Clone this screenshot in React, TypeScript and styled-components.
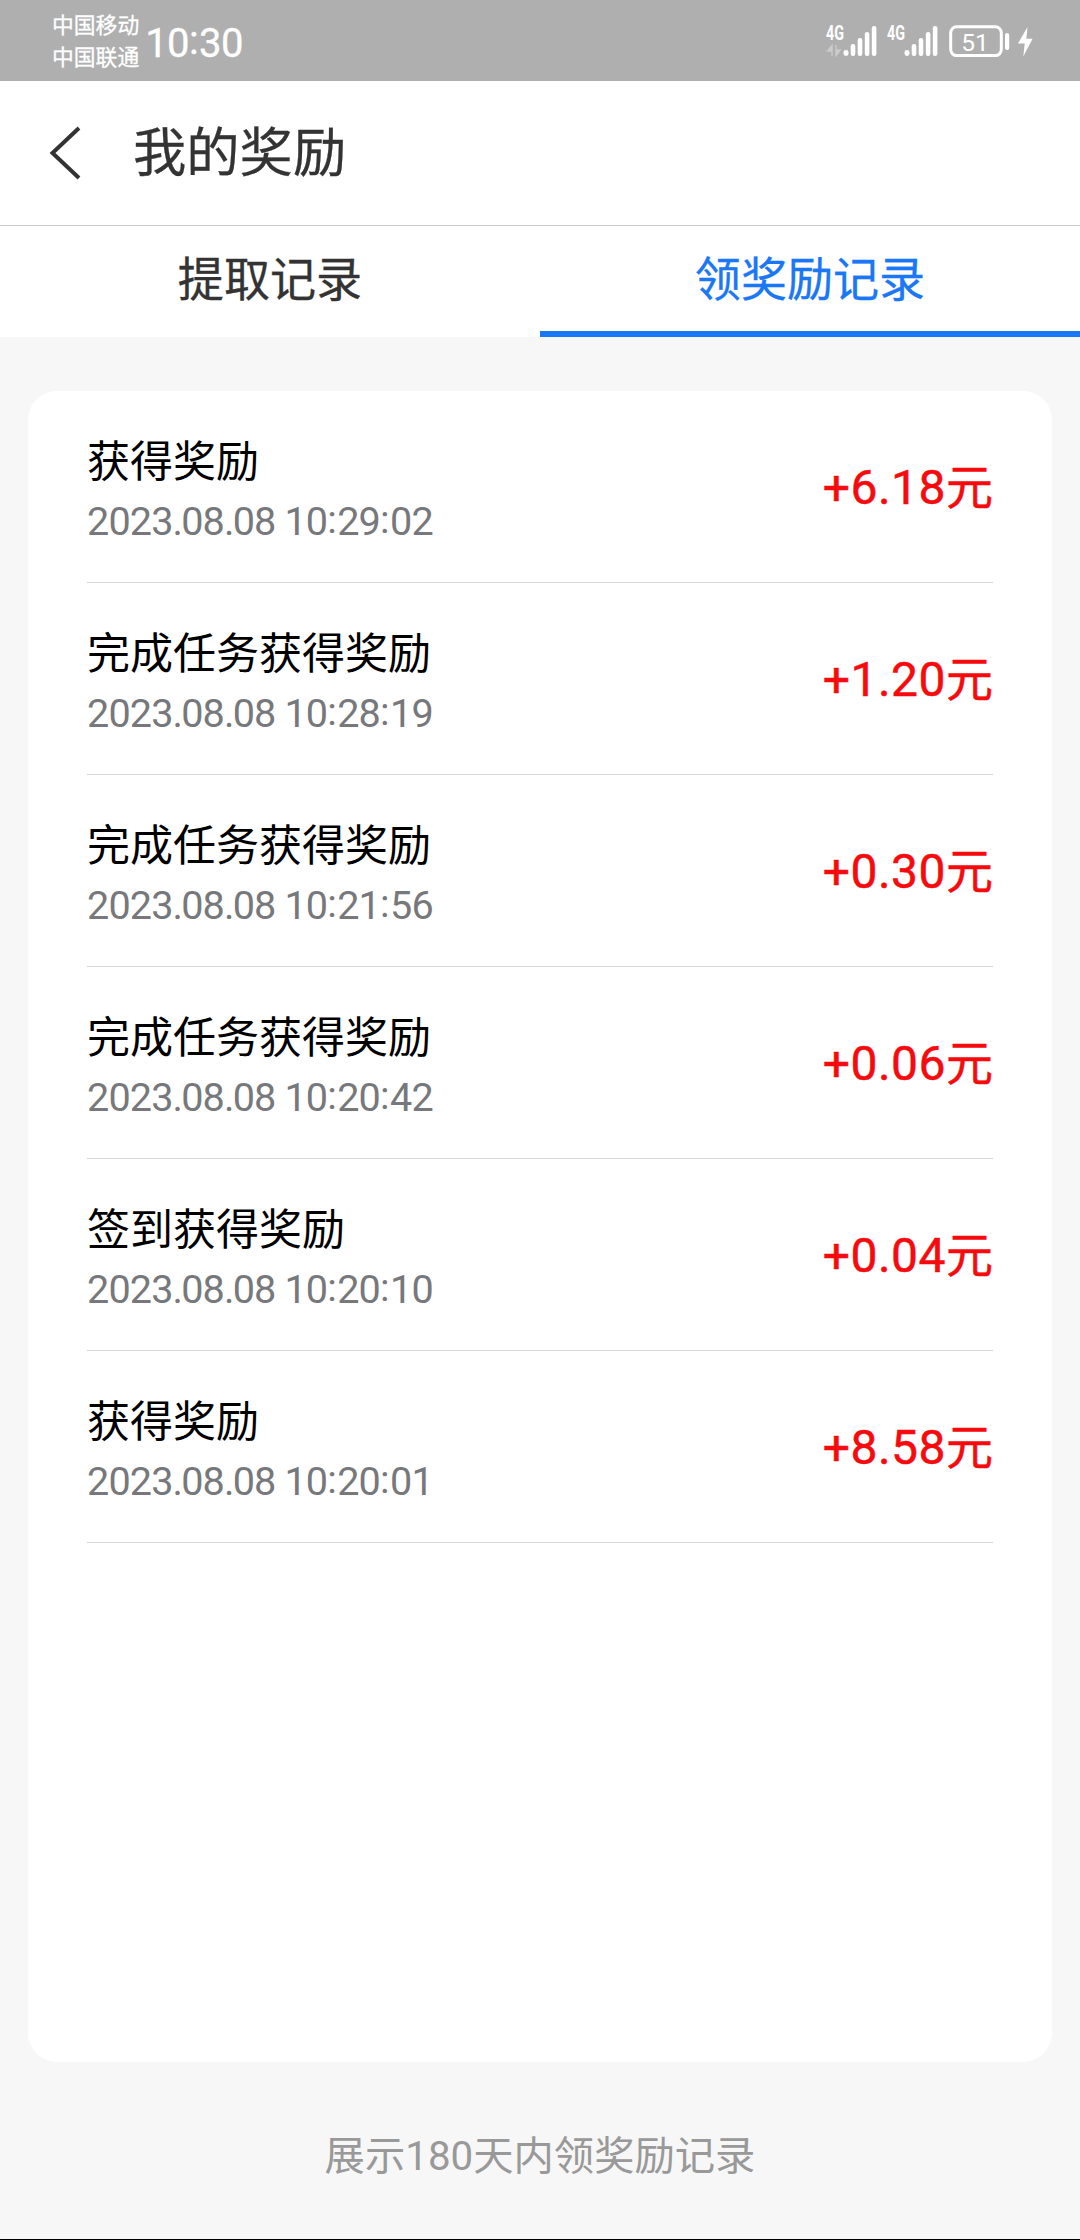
import React from 'react';
import styled, { createGlobalStyle } from 'styled-components';

const Global = createGlobalStyle`
  * { box-sizing: border-box; }
  html, body { margin: 0; padding: 0; background: #f7f7f7; }
  body { font-family: Roboto, "Noto Sans CJK SC", sans-serif; }
`;

const Screen = styled.div`
  display: flex;
  flex-direction: column;
  width: 1080px;
  height: 2240px;
  overflow: hidden;
  background: #f7f7f7;
  border-bottom: 1px solid #000;
`;

const StatusBar = styled.header`
  display: flex;
  align-items: center;
  justify-content: space-between;
  flex: none;
  height: 81px;
  padding: 0 46px 0 52px;
  background: #afafaf;
  color: #fff;
`;

const StatusGroup = styled.div`
  display: flex;
  align-items: center;
`;

const Carriers = styled.div`
  display: flex;
  flex-direction: column;
  padding-top: 2px;
  font-size: 21.8px;
  line-height: 32px;
  -webkit-text-stroke: 0.3px currentColor;
`;

const Clock = styled.time`
  margin: 6px 0 0 6px;
  font-size: 40px;
  line-height: 48px;
  letter-spacing: -0.6px;
  -webkit-text-stroke: 0.3px currentColor;
`;

const NavBar = styled.nav`
  display: flex;
  align-items: center;
  flex: none;
  height: 145px;
  padding-left: 49px;
  gap: 51px;
  background: #fff;
  border-bottom: 1px solid #c8c8c8;
`;

const BackButton = styled.button`
  display: flex;
  padding: 0;
  border: 0;
  background: none;
`;

const Title = styled.h1`
  margin: 0;
  padding-top: 2px;
  color: #333;
  font-size: 53.3px;
  font-weight: 400;
  line-height: 72px;
  -webkit-text-stroke: 0.3px currentColor;
`;

const Tabs = styled.div`
  display: grid;
  grid-template-columns: 1fr 1fr;
  flex: none;
  height: 111px;
  background: #fff;
`;

const Tab = styled.button<{ $active?: boolean }>`
  display: flex;
  align-items: center;
  justify-content: center;
  padding: 2px 0 0;
  border: 0;
  border-bottom: 6px solid ${p => (p.$active ? '#1a77f6' : '#fff')};
  background: #fff;
  color: ${p => (p.$active ? '#1a77f6' : '#333')};
  font-family: inherit;
  font-size: 46.08px;
  line-height: 64px;
  -webkit-text-stroke: 0.3px currentColor;
`;

const Card = styled.main`
  flex: none;
  height: 1671px;
  margin: 54px 28px 0;
  padding: 0 59px;
  border-radius: 29px;
  background: #fff;
`;

const Row = styled.article`
  display: flex;
  align-items: center;
  justify-content: space-between;
  height: 192px;
  border-bottom: 1px solid #d6d6d6;
`;

const RowText = styled.div`
  display: flex;
  flex-direction: column;
  gap: 3px;
  padding-top: 8px;
`;

const RowTitle = styled.div`
  color: #000;
  font-size: 43px;
  line-height: 60px;
`;

const RowTime = styled.time`
  color: #77787c;
  font-size: 39.6px;
  line-height: 54px;
  letter-spacing: -0.85px;
  white-space: pre;
`;

const Dot = styled.span`
  letter-spacing: -1.8px;
`;

const Colon = styled.span<{ $raise: number }>`
  line-height: 0;
  letter-spacing: 0.4px;
  vertical-align: ${p => p.$raise}px;
`;

const Amount = styled.div`
  padding-top: 3px;
  color: #f60a0e;
  font-size: 47px;
  line-height: 64px;
  -webkit-text-stroke: 0.5px currentColor;
`;

const Digits = styled.span`
  font-size: 48px;
  letter-spacing: 0.5px;
`;

const Footer = styled.footer`
  margin-top: 63px;
  color: #999;
  font-size: 40.32px;
  line-height: 64px;
  text-align: center;
`;

const StatusIcons = () => (
  <svg width="236" height="40" viewBox="798 20 236 40" fill="#fff">
    {[0, 61].map(dx => (
      <g key={dx} transform={`translate(${dx} 0)`}>
        <text x="826" y="38.6" fontFamily="Roboto" fontWeight="700" fontSize="20" textLength="18" lengthAdjust="spacingAndGlyphs">4G</text>
        <rect x="843.5" y="49" width="5" height="6" rx="2.4" />
        <rect x="850.7" y="43" width="4.6" height="12" rx="2.2" />
        <rect x="857.7" y="37" width="4.6" height="18" rx="2.2" />
        <rect x="864.8" y="31" width="4.6" height="24" rx="2.2" />
        <rect x="871.8" y="25" width="4.6" height="30" rx="2.2" />
      </g>
    ))}
    <path d="M832 44v11M832 44.5l-4.5 5.5h4.5zM836 44v11M836 54.5l4.3-5.5h-4.3z" fill="#cbcbcb" stroke="#cbcbcb" strokeWidth="1.4" />
    <rect x="950.7" y="25.8" width="50.6" height="28.8" rx="6" fill="none" stroke="#fff" strokeWidth="3" />
    <text x="975" y="49.6" fontFamily="Roboto" fontSize="24.5" textAnchor="middle">51</text>
    <rect x="1005" y="32" width="4.2" height="17" rx="2" />
    <path d="M1027.5 26l-9.5 16.5h6.7l-1.4 13 9.3-17.8h-6.3z" />
  </svg>
);

/* Tightens the dots and centres the colons on the digits of a timestamp. */
const Stamp = ({ value }: { value: string }) => (
  <RowTime>
    {value.split(/([.:])/).map((part, i) =>
      part === '.' ? <Dot key={i}>.</Dot> : part === ':' ? <Colon key={i} $raise={2}>:</Colon> : part,
    )}
  </RowTime>
);

const rewards = [
  { title: '获得奖励', time: '2023.08.08 10:29:02', amount: '+6.18' },
  { title: '完成任务获得奖励', time: '2023.08.08 10:28:19', amount: '+1.20' },
  { title: '完成任务获得奖励', time: '2023.08.08 10:21:56', amount: '+0.30' },
  { title: '完成任务获得奖励', time: '2023.08.08 10:20:42', amount: '+0.06' },
  { title: '签到获得奖励', time: '2023.08.08 10:20:10', amount: '+0.04' },
  { title: '获得奖励', time: '2023.08.08 10:20:01', amount: '+8.58' },
];

export default function App() {
  return (
    <>
      <Global />
      <Screen>
        <StatusBar>
          <StatusGroup>
            <Carriers>
              <span>中国移动</span>
              <span>中国联通</span>
            </Carriers>
            <Clock>10<Colon $raise={3}>:</Colon>30</Clock>
          </StatusGroup>
          <StatusIcons />
        </StatusBar>
        <NavBar>
          <BackButton aria-label="返回">
            <svg width="33" height="54" viewBox="0 0 33 54" fill="none" stroke="#333" strokeWidth="4">
              <path d="M30 2L3.5 27 30 52" />
            </svg>
          </BackButton>
          <Title>我的奖励</Title>
        </NavBar>
        <Tabs>
          <Tab>提取记录</Tab>
          <Tab $active>领奖励记录</Tab>
        </Tabs>
        <Card>
          {rewards.map(r => (
            <Row key={r.time}>
              <RowText>
                <RowTitle>{r.title}</RowTitle>
                <Stamp value={r.time} />
              </RowText>
              <Amount><Digits>{r.amount}</Digits>元</Amount>
            </Row>
          ))}
        </Card>
        <Footer>展示180天内领奖励记录</Footer>
      </Screen>
    </>
  );
}
